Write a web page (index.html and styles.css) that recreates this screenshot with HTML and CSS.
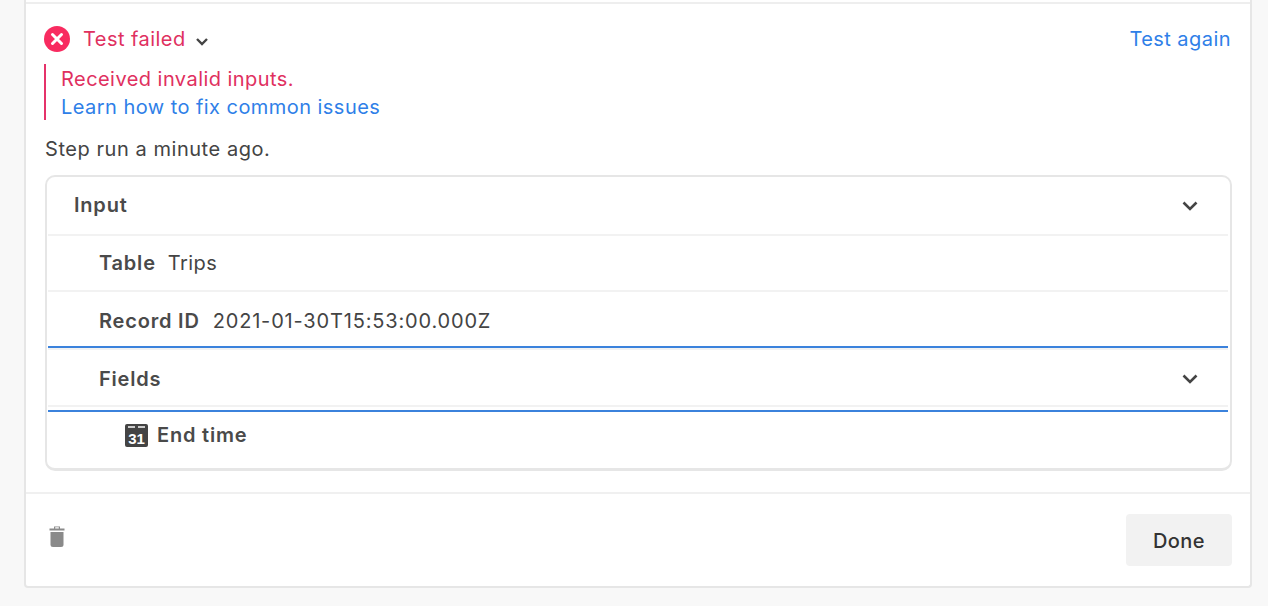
FILE: index.html
```html
<!DOCTYPE html>
<html lang="en">
<head>
<meta charset="utf-8">
<title>Test failed</title>
<link rel="stylesheet" href="styles.css">
</head>
<body>
<main class="panel">
  <div class="top-rule"></div>
  <section class="content">
    <div class="status-row">
      <div class="status">
        <svg class="status-icon" viewBox="0 0 26 26" width="26" height="26"><circle cx="13" cy="13" r="13" fill="#f82b60"/><path d="M8.500 8.500l9 9M17.500 8.500l-9 9" stroke="#fff" stroke-width="3" stroke-linecap="round"/></svg>
        <span class="status-text">Test failed</span>
        <svg class="caret-small" viewBox="0 0 14 10" width="14" height="10"><path d="M2 2l5 5 5-5" fill="none" stroke="#444" stroke-width="2.400"/></svg>
      </div>
      <a class="link">Test again</a>
    </div>
    <div class="error">
      <div class="error-text">Received invalid inputs.</div>
      <a class="link">Learn how to fix common issues</a>
    </div>
    <p class="step">Step run a minute ago.</p>
    <div class="box">
      <div class="row row-input">
        <strong>Input</strong>
        <svg class="caret caret-input" viewBox="0 0 16 12" width="16" height="12"><path d="M1.500 2.500l6.500 6.500 6.500-6.500" fill="none" stroke="#444" stroke-width="2.600"/></svg>
      </div>
      <div class="row row-table"><strong>Table</strong><span>Trips</span></div>
      <div class="row row-record"><strong>Record ID</strong><span class="record-value">2021-01-30T15:53:00.000Z</span></div>
      <div class="row row-fields">
        <strong>Fields</strong>
        <svg class="caret" viewBox="0 0 16 12" width="16" height="12"><path d="M1.500 2.500l6.500 6.500 6.500-6.500" fill="none" stroke="#444" stroke-width="2.600"/></svg>
      </div>
      <div class="row-end">
        <span class="cal"><span class="cal-bars"></span><span class="cal-num">31</span></span>
        <strong>End time</strong>
      </div>
    </div>
  </section>
  <footer class="footer">
    <svg class="trash" viewBox="0 0 16 24" width="16" height="24"><path d="M5 2.500h6v2h4.500v2h-15v-2H5z M6.200 3.200v1.300h3.600V3.200z" fill="#8a8a8a" fill-rule="evenodd"/><path d="M1.500 8h13v12.500a2.500 2.500 0 0 1-2.500 2.500H4a2.500 2.500 0 0 1-2.500-2.500z" fill="#8a8a8a"/></svg>
    <button class="done">Done</button>
  </footer>
</main>
</body>
</html>
```
FILE: styles.css
```css
* { box-sizing: border-box; }
html, body { margin: 0; height: 606px; overflow: hidden; }
body {
  background: #f8f8f8;
  font-family: Inter, "Liberation Sans", sans-serif;
  font-size: 20px;
  letter-spacing: 0.45px;
  color: #444;
}
.panel {
  width: 1228px;
  height: 588px;
  margin-left: 24px;
  background: #fff;
  border: solid #e6e6e6;
  border-width: 0 2px 2px 2px;
  border-radius: 0 0 4px 4px;
  display: flex;
  flex-direction: column;
}
.top-rule { height: 2px; margin-top: 2px; background: #eee; flex: none; }
.content { padding: 0 18px; flex: none; height: 490px; border-bottom: 2px solid #f0f0f0; }
.status-row {
  height: 60px;
  display: flex;
  align-items: center;
  justify-content: space-between;
  padding: 10px 1px 0 0;
}
.status { display: flex; align-items: center; }
.status-icon { flex: none; }
.status-text { color: #e0305f; margin-left: 13px; }
.caret-small { margin-left: 9px; margin-top: 5px; }
.link { color: #2f7fe8; }
.error {
  height: 56px;
  border-left: 2px solid #e5336a;
  padding: 1px 0 0 15px;
  line-height: 28px;
  display: flex;
  flex-direction: column;
}
.error-text { color: #e0305f; }
.step { margin: 14px 0 0 1px; line-height: 30px; height: 30px; letter-spacing: 0.55px; }
.box {
  margin: 11px 0 0 1px;
  height: 296px;
  border: 2px solid #e6e6e6;
  border-bottom-width: 3px;
  border-radius: 10px;
  padding: 0 2px 0 1px;
}
strong { font-weight: 600; letter-spacing: 0.8px; color: #4a4a4a; }
.row { display: flex; align-items: center; }
.row-input {
  height: 59px;
  border-bottom: 2px solid #f2f2f2;
  padding: 0 30px 2px 26px;
  justify-content: space-between;
}
.caret-input { margin-top: 2px; }
.row-table, .row-record {
  height: 56px;
  border-bottom: 2px solid #f2f2f2;
  padding-left: 51px;
  gap: 12px;
}
.row-record { border-bottom: 2px solid #3b82dc; padding-top: 4px; gap: 13px; }
.record-value { letter-spacing: 0.83px; }
.row-fields {
  height: 64px;
  border-top: 2px solid #f2f2f2;
  border-bottom: 2px solid #3b82dc;
  box-shadow: inset 0 -3px 0 #fff, inset 0 -5px 0 #f2f2f2;
  padding: 0 30px 2px 51px;
  justify-content: space-between;
}
.row-end { display: flex; align-items: center; padding: 11px 0 0 77px; gap: 9px; }
.cal {
  width: 23px;
  height: 23px;
  border-radius: 2px;
  background: #444;
  display: block;
  position: relative;
  overflow: hidden;
  flex: none;
}
.cal-bars {
  position: absolute;
  left: 3px;
  right: 3px;
  top: 2px;
  height: 2px;
  background: linear-gradient(90deg, #ccc 42%, #444 42%, #444 58%, #ccc 58%);
}
.cal-num { position: absolute; left: 0; right: 0; top: 6px; text-align: center; color: #fff; font: 700 15px/17px "Liberation Sans", sans-serif; letter-spacing: 0; }
.footer {
  flex: 1;
  display: flex;
  justify-content: space-between;
  align-items: flex-start;
  padding: 20px 18px 0 23px;
}
.trash { margin-top: 10px; }
.done {
  width: 106px;
  height: 52px;
  border: 0;
  border-radius: 4px;
  background: #f2f2f2;
  color: #333;
  font: 500 20px Inter, "Liberation Sans", sans-serif;
  letter-spacing: 0.45px;
  padding: 1px 0 0;
}
```
